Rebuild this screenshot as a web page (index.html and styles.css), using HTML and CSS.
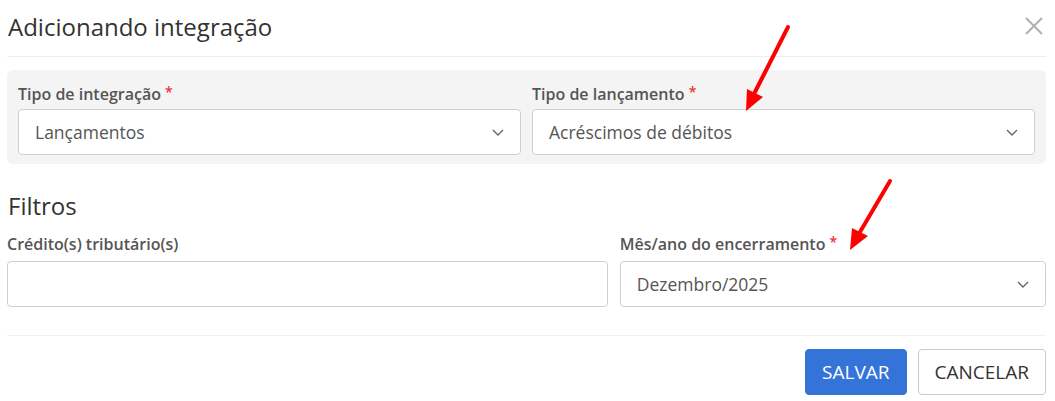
FILE: index.html
```html
<!DOCTYPE html>
<html lang="pt-BR">

<head>
    <meta charset="UTF-8">
    <meta name="viewport" content="width=device-width, initial-scale=1.0">
    <title>Adicionando integração</title>
    <link rel="stylesheet" href="styles.css">
</head>

<body>
    <div class="modal">
        <div class="modal-header">
            <h1>Adicionando integração</h1>
            <button class="close" aria-label="Fechar">
                <svg width="18" height="18" viewBox="0 0 18 18">
                    <path d="M1 1 L17 17 M17 1 L1 17" stroke="#b0b0b0" stroke-width="2" fill="none"/>
                </svg>
            </button>
        </div>

        <div class="panel">
            <div class="field">
                <label>Tipo de integração <span class="req">*</span></label>
                <div class="select">
                    <span>Lançamentos</span>
                    <svg class="chevron" width="12" height="7" viewBox="0 0 12 7">
                        <path d="M1 1 L6 6 L11 1" stroke="#666" stroke-width="1.4" fill="none"/>
                    </svg>
                </div>
            </div>
            <div class="field">
                <label>Tipo de lançamento <span class="req">*</span></label>
                <div class="select">
                    <span>Acréscimos de débitos</span>
                    <svg class="chevron" width="12" height="7" viewBox="0 0 12 7">
                        <path d="M1 1 L6 6 L11 1" stroke="#666" stroke-width="1.4" fill="none"/>
                    </svg>
                </div>
            </div>
        </div>

        <h2>Filtros</h2>
        <div class="filters">
            <div class="field">
                <label>Crédito(s) tributário(s)</label>
                <div class="select input"></div>
            </div>
            <div class="field">
                <label>Mês/ano do encerramento <span class="req">*</span></label>
                <div class="select">
                    <span>Dezembro/2025</span>
                    <svg class="chevron" width="12" height="7" viewBox="0 0 12 7">
                        <path d="M1 1 L6 6 L11 1" stroke="#666" stroke-width="1.4" fill="none"/>
                    </svg>
                </div>
            </div>
        </div>

        <div class="modal-footer">
            <button class="btn primary">SALVAR</button>
            <button class="btn">CANCELAR</button>
        </div>
    </div>

    <!-- annotation arrows -->
    <svg class="arrows" width="1055" height="401" viewBox="0 0 1055 401">
        <line x1="788" y1="27" x2="755" y2="92" stroke="#ff0000" stroke-width="4" stroke-linecap="round"/>
        <polygon points="746,111 747,89 763,97" fill="#ff0000"/>
        <line x1="890" y1="181" x2="860" y2="232" stroke="#ff0000" stroke-width="4" stroke-linecap="round"/>
        <polygon points="850,250 852,228 868,236" fill="#ff0000"/>
    </svg>
</body>

</html>
```

FILE: styles.css
```css
body {
    margin: 0;
    padding: 0;
    font-family: 'Open Sans', sans-serif;
    background: #fff;
    position: relative;
    overflow: hidden;
}

.modal {
    padding: 0 9px 0 7px;
}

.modal-header {
    display: flex;
    align-items: center;
    justify-content: space-between;
    height: 56px;
    border-bottom: 1px solid #eeeeee;
}

h1 {
    margin: 0 0 4px 1px;
    font-size: 24px;
    font-weight: 400;
    color: #333;
}

.close {
    border: none;
    background: none;
    padding: 0;
    margin: 0 3px 4px 0;
    width: 18px;
    height: 18px;
    cursor: pointer;
}

.panel {
    margin-top: 13px;
    background: #f4f4f4;
    border-radius: 6px;
    padding: 14px 11px 9px 11px;
    display: grid;
    grid-template-columns: 1fr 1fr;
    gap: 11px;
}

.field label {
    display: block;
    height: 20px;
    font-size: 16px;
    line-height: 20px;
    font-weight: 600;
    color: #555;
    margin-bottom: 5px;
}

.req {
    color: #ee3333;
    font-size: 14px;
    line-height: 0;
    vertical-align: 3px;
}

.select {
    height: 46px;
    box-sizing: border-box;
    background: #fff;
    border: 1px solid #cfcfcf;
    border-radius: 4px;
    display: flex;
    align-items: center;
    justify-content: space-between;
    padding: 0 16px;
    font-size: 17.5px;
    color: #555;
}

h2 {
    margin: 26px 0 0 1px;
    font-size: 24px;
    line-height: 32px;
    font-weight: 400;
    color: #333;
}

.filters {
    margin-top: 12px;
    display: grid;
    grid-template-columns: 58.5fr 41.5fr;
    gap: 12px;
}

.filters .field label {
    margin-bottom: 7px;
}

.modal-footer {
    margin-top: 28px;
    border-top: 1px solid #f0f0f0;
    padding-top: 13px;
    display: flex;
    justify-content: flex-end;
    gap: 11px;
}

.btn {
    height: 46px;
    padding: 0 16px;
    font-family: 'Open Sans', sans-serif;
    font-size: 19px;
    color: #333;
    background: #fff;
    border: 1px solid #cccccc;
    border-radius: 4px;
    cursor: pointer;
}

.btn.primary {
    background: #3474d9;
    border-color: #3474d9;
    color: #fff;
}

.arrows {
    position: absolute;
    top: 0;
    left: 0;
    pointer-events: none;
}
```
